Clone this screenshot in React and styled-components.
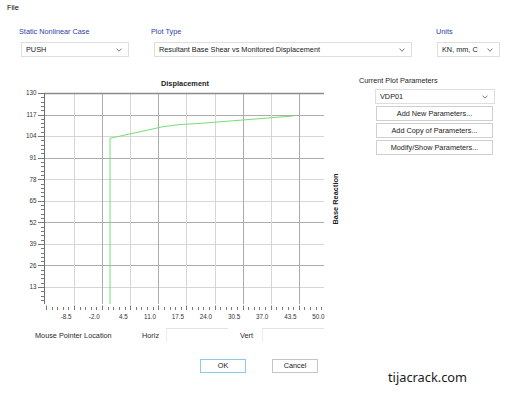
import React from "react";
import styled, { createGlobalStyle } from "styled-components";

const GlobalStyle = createGlobalStyle`
  html, body {
    margin: 0;
    padding: 0;
    background: #fff;
  }
  body {
    font-family: "Liberation Sans", Arial, sans-serif;
    font-size: 7.3px;
    color: #262626;
  }
`;

// chart scale, in page pixels
const PLOT = { left: 44, right: 324, top: 93, bottom: 304 };
const yPos = (v) => 93 + ((130 - v) / 13) * 21.56;
const xPos = (v) => 74 + ((v + 8.5) / 6.5) * 28.1;
const crisp = (n) => Math.round(n) + 0.5;

const yValues = [130, 117, 104, 91, 78, 65, 52, 39, 26, 13];
const yDark = [117, 91, 52, 26];
const xValues = [-8.5, -2.0, 4.5, 11.0, 17.5, 24.0, 30.5, 37.0, 43.5, 50.0];
const xDark = [-2.0, 11.0, 30.5, 43.5];

const curve = [
  [110, 304],
  [110, 138.3],
  [163, 126.7],
  [180, 124.5],
  [200, 123.4],
  [293, 116],
];

const Chevron = () => (
  <svg width="6" height="4" viewBox="0 0 6 4">
    <polyline
      points="0.5,0.6 3,3.2 5.5,0.6"
      fill="none"
      stroke="#555"
      strokeWidth="0.8"
    />
  </svg>
);

const PlotChart = () => {
  const yMinor = [];
  for (let y = PLOT.top; y <= PLOT.bottom; y += 21.56 / 5) yMinor.push(y);
  const xMinor = [];
  for (let x = xPos(-8.5) - 28.1; x <= PLOT.right; x += 28.1 / 5) xMinor.push(x);

  return (
    <Chart width="350" height="265" viewBox="0 57 350 265">
      <ChartTitle x="185" y="86" textAnchor="middle">
        Displacement
      </ChartTitle>
      <ChartTitle
        x="335"
        y="199"
        textAnchor="middle"
        transform="rotate(-90 335 199)"
        dy="2.5"
      >
        Base Reaction
      </ChartTitle>

      {yValues.slice(1).map((v) => (
        <line
          key={"hy" + v}
          x1={PLOT.left}
          x2={PLOT.right}
          y1={crisp(yPos(v))}
          y2={crisp(yPos(v))}
          stroke={yDark.includes(v) ? "#ababab" : "#d6d6d6"}
        />
      ))}
      {xValues.slice(0, 9).map((v) => (
        <line
          key={"vx" + v}
          x1={crisp(xPos(v))}
          x2={crisp(xPos(v))}
          y1={PLOT.top}
          y2={PLOT.bottom}
          stroke={xDark.includes(v) ? "#ababab" : "#d6d6d6"}
        />
      ))}

      <line x1={PLOT.left} x2={PLOT.right} y1="93.5" y2="93.5" stroke="#8a8a8a" strokeWidth="1.3" />
      <line x1="44.5" x2="44.5" y1={PLOT.top} y2={PLOT.bottom} stroke="#6f6f6f" />

      {yMinor.map((y, i) => (
        <line
          key={"ym" + i}
          x1={i % 5 === 0 ? 38 : 41}
          x2="44"
          y1={crisp(y)}
          y2={crisp(y)}
          stroke="#555"
          strokeWidth="0.8"
        />
      ))}
      {yValues.map((v) => (
        <AxisText key={"yl" + v} x="36.5" y={yPos(v) + 2.3} textAnchor="end">
          {v}
        </AxisText>
      ))}

      {xMinor.map((x, i) => (
        <line
          key={"xm" + i}
          x1={crisp(x)}
          x2={crisp(x)}
          y1={i % 5 === 0 ? 305.5 : 307}
          y2="310"
          stroke="#555"
          strokeWidth="0.8"
        />
      ))}
      {xValues.map((v) => (
        <AxisText key={"xl" + v} x={xPos(v) - 2.4} y="318.5" textAnchor="end">
          {v.toFixed(1)}
        </AxisText>
      ))}

      <polyline
        points={curve.map((p) => p.join(",")).join(" ")}
        fill="none"
        stroke="#74e074"
        strokeWidth="1"
      />
    </Chart>
  );
};

const App = () => {
  return (
    <Window>
      <GlobalStyle />
      <MenuBar>File</MenuBar>

      <TopRow>
        <Field>
          <FieldLabel>Static Nonlinear Case</FieldLabel>
          <Select $width={108}>
            PUSH
            <Chevron />
          </Select>
        </Field>
        <Field>
          <FieldLabel>Plot Type</FieldLabel>
          <Select $width={258} $indent={3}>
            Resultant Base Shear vs Monitored Displacement
            <Chevron />
          </Select>
        </Field>
        <Field>
          <FieldLabel>Units</FieldLabel>
          <Select $width={63} $indent={1}>
            KN, mm, C
            <Chevron />
          </Select>
        </Field>
      </TopRow>

      <Main>
        <PlotChart />
        <Side>
          <SideLabel>Current Plot Parameters</SideLabel>
          <SideControls>
            <Select $width={120} $indent={0}>
              VDP01
              <Chevron />
            </Select>
            <SideButton>Add New Parameters...</SideButton>
            <SideButton>Add Copy of Parameters...</SideButton>
            <SideButton>Modify/Show Parameters...</SideButton>
          </SideControls>
        </Side>
      </Main>

      <MouseRow>
        <Caption $w={107}>Mouse Pointer Location</Caption>
        <Caption $w={24}>Horiz</Caption>
        <ReadOut />
        <Caption $w={34} $pl={12}>
          Vert
        </Caption>
        <ReadOut />
      </MouseRow>

      <ButtonRow>
        <DialogButton $focused>OK</DialogButton>
        <DialogButton>Cancel</DialogButton>
      </ButtonRow>

      <Watermark>tijacrack.com</Watermark>
    </Window>
  );
};

const Window = styled.div`
  position: relative;
  width: 508px;
  height: 401px;
  overflow: hidden;
  background: #fff;
`;

const MenuBar = styled.div`
  height: 16px;
  line-height: 16px;
  padding-left: 7px;
  color: #000;
`;

const TopRow = styled.div`
  display: grid;
  grid-template-columns: 132px 285px 64px;
  padding: 11px 0 0 19px;
`;

const Field = styled.div`
  display: flex;
  flex-direction: column;
  gap: 5px;
`;

const FieldLabel = styled.div`
  height: 10px;
  line-height: 10px;
  color: #2f3cae;
`;

const Select = styled.div`
  display: flex;
  align-items: center;
  justify-content: space-between;
  box-sizing: border-box;
  width: ${(p) => p.$width}px;
  height: 15px;
  margin-left: ${(p) => (p.$indent ?? 2)}px;
  padding: 0 6px 0 4px;
  border: 1px solid #dedede;
  background: #fff;
  color: #1a1a1a;
  white-space: nowrap;
`;

const Main = styled.div`
  display: flex;
  height: 265px;
`;

const Chart = styled.svg`
  display: block;
  flex: none;
`;

const ChartTitle = styled.text`
  font-family: "Liberation Sans", Arial, sans-serif;
  font-size: 7.4px;
  font-weight: bold;
  fill: #1e1e1e;
`;

const AxisText = styled.text`
  font-family: "Liberation Sans", Arial, sans-serif;
  font-size: 6.3px;
  fill: #333;
`;

const Side = styled.div`
  display: flex;
  flex-direction: column;
  padding: 19px 0 0 8px;
`;

const SideLabel = styled.div`
  height: 10px;
  line-height: 10px;
  padding-left: 1px;
  color: #1e1e1e;
`;

const SideControls = styled.div`
  display: flex;
  flex-direction: column;
  gap: 2px;
  margin: 3px 0 0 17px;
`;

const SideButton = styled.div`
  box-sizing: border-box;
  width: 117px;
  height: 15px;
  margin-left: 1px;
  line-height: 13px;
  text-align: center;
  border: 1px solid #cfcfcf;
  background: #fff;
  color: #222;
`;

const MouseRow = styled.div`
  display: flex;
  align-items: center;
  height: 14px;
  margin-top: 6px;
  padding-left: 35px;
`;

const Caption = styled.div`
  box-sizing: border-box;
  width: ${(p) => p.$w}px;
  padding-left: ${(p) => p.$pl || 0}px;
  color: #2a2a2a;
  white-space: nowrap;
`;

const ReadOut = styled.div`
  box-sizing: border-box;
  width: 62px;
  height: 14px;
  border-top: 1px solid #e2e2e2;
  border-left: 1px solid #ececec;
`;

const ButtonRow = styled.div`
  display: flex;
  gap: 26px;
  margin-top: 17px;
  padding-left: 200px;
`;

const DialogButton = styled.div`
  box-sizing: border-box;
  width: 46px;
  height: 14px;
  line-height: 12px;
  text-align: center;
  border: 1px solid ${(p) => (p.$focused ? "#8ccbe8" : "#c4c4c4")};
  background: #fff;
  color: #222;
`;

const Watermark = styled.div`
  position: absolute;
  left: 388px;
  top: 369px;
  font-family: "Noto Sans", "Open Sans", sans-serif;
  font-size: 12.8px;
  line-height: 16px;
  color: #1a1a1a;
`;

export default App;
